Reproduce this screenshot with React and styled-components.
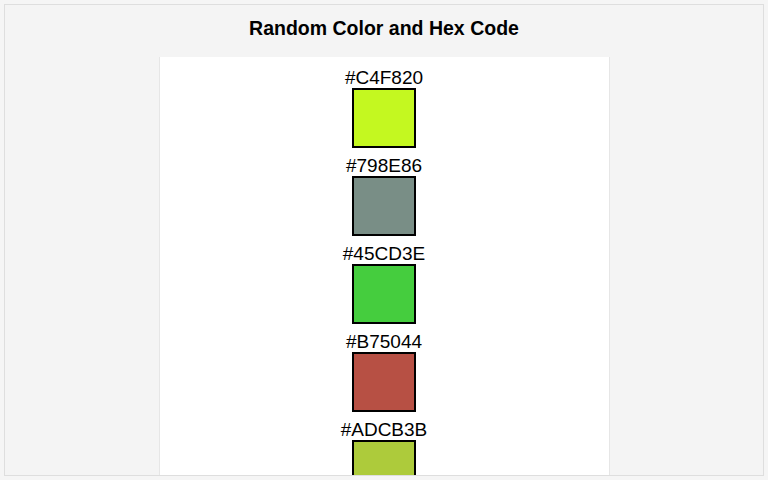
import React from "react";
import styled, { createGlobalStyle } from "styled-components";

const GlobalStyle = createGlobalStyle`
  html, body {
    margin: 0;
    padding: 0;
    background: #f5f5f5;
    font-family: "Liberation Sans", Arial, sans-serif;
  }
  body {
    padding: 4px;
    box-sizing: border-box;
    height: 480px;
    overflow: hidden;
  }
`;

const Frame = styled.div`
  box-sizing: border-box;
  height: 472px;
  border: 1px solid #dedede;
  background: #f4f4f4;
  display: flex;
  flex-direction: column;
  align-items: center;
  overflow: hidden;
`;

const Title = styled.h1`
  margin: 0;
  padding-top: 12px;
  height: 38px;
  box-sizing: border-box;
  font-size: 19.5px;
  line-height: 23px;
  font-weight: bold;
  color: #000;
`;

const Panel = styled.div`
  width: 449px;
  margin-top: 17px;
  flex: 1;
  background: #fff;
  border-left: 1px solid #e6e6e6;
  border-right: 1px solid #e6e6e6;
  display: flex;
  flex-direction: column;
  align-items: center;
  padding-top: 10px;
`;

const Item = styled.div`
  display: flex;
  flex-direction: column;
  align-items: center;
  margin-bottom: 7px;
`;

const Hex = styled.div`
  font-size: 19px;
  line-height: 21px;
  color: #000;
`;

const Swatch = styled.div`
  box-sizing: border-box;
  width: 64px;
  height: 60px;
  border: 2px solid #000;
  background: ${(p) => p.$color};
`;

const colors = ["#C4F820", "#798E86", "#45CD3E", "#B75044", "#ADCB3B"];

export default function App() {
  return (
    <>
      <GlobalStyle />
      <Frame>
        <Title>Random Color and Hex Code</Title>
        <Panel>
          {colors.map((c) => (
            <Item key={c}>
              <Hex>{c}</Hex>
              <Swatch $color={c} />
            </Item>
          ))}
        </Panel>
      </Frame>
    </>
  );
}
